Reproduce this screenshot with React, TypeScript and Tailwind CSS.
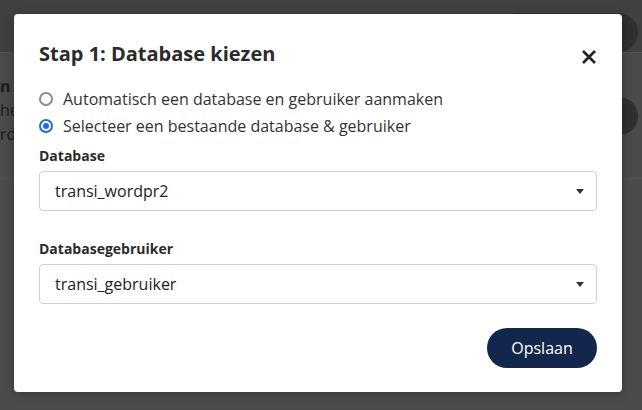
import { useState } from 'react'

type Option = { id: string; label: string }

const options: Option[] = [
  { id: 'auto', label: 'Automatisch een database en gebruiker aanmaken' },
  { id: 'existing', label: 'Selecteer een bestaande database & gebruiker' },
]

function Radio({ checked }: { checked: boolean }) {
  // eigen rondje i.p.v. native input, zodat de maat vastligt
  return checked ? (
    <span className="flex h-[14px] w-[14px] shrink-0 items-center justify-center rounded-full border-2 border-[#1a6ee6] bg-white">
      <span className="h-[6px] w-[6px] rounded-full bg-[#1a6ee6]" />
    </span>
  ) : (
    <span className="h-[14px] w-[14px] shrink-0 rounded-full border-2 border-[#8d8d92] bg-white" />
  )
}

function SelectBox({ value }: { value: string }) {
  return (
    <div className="flex h-[40px] items-center justify-between rounded-[4px] border border-[#cfcfcf] bg-white pl-[15px] pr-[12px] text-[16px] text-[#222]">
      <span>{value}</span>
      <svg width="8" height="5" viewBox="0 0 8 5" className="mt-[1px]">
        <path d="M0 0h8L4 5z" fill="#333" />
      </svg>
    </div>
  )
}

export default function App() {
  const [choice, setChoice] = useState('existing')

  return (
    <div className="relative h-[410px] w-[642px] overflow-hidden bg-[#4a4a4a] font-['Open_Sans',sans-serif]">
      {/* gedimde pagina achter de modal */}
      <header className="flex h-[53px] border-b border-[#525252] bg-[#404040]">
        <div className="ml-auto mr-[4px] mt-[13px] h-[39px] w-[140px] rounded-full bg-[#2f2f2f]" />
      </header>
      <section className="flex h-[125px]">
        <div className="flex w-[15px] flex-col items-start pt-[21px] text-[16px] leading-[24px] text-[#1c1c1c]">
          <span className="font-bold">n</span>
          <span>he</span>
          <span>rd</span>
        </div>
        <div className="ml-auto mr-[4px] mt-[44px] h-[38px] w-[140px] rounded-full bg-[#2f2f2f]" />
      </section>
      <div className="h-full border-t border-[#525252] bg-[#4b4b4b]" />

      <div className="absolute left-[14px] top-[14px] flex w-[608px] flex-col rounded-[4px] bg-white px-[25px] pb-[24px] pt-[25px] shadow-[0_2px_10px_rgba(0,0,0,0.25)]">
        <div className="flex items-start justify-between">
          <h2 className="text-[20px] font-bold leading-[30px] text-[#2b2b2b]">Stap 1: Database kiezen</h2>
          <svg width="16" height="16" viewBox="0 0 16 16" className="mt-[10px]">
            <path d="M2 2l12 12M14 2L2 14" stroke="#222" strokeWidth="2.6" />
          </svg>
        </div>

        <div className="mt-[16px] flex flex-col">
          {options.map((o) => (
            <label
              key={o.id}
              onClick={() => setChoice(o.id)}
              className="flex h-[27px] cursor-pointer items-center gap-[10px] text-[16px] text-[#333]"
            >
              <Radio checked={choice === o.id} />
              <span>{o.label}</span>
            </label>
          ))}
        </div>

        <div className="mt-[6px] text-[14px] font-bold leading-[21px] text-[#2b2b2b]">Database</div>
        <div className="mt-[5px]">
          <SelectBox value="transi_wordpr2" />
        </div>

        <div className="mt-[27px] text-[14px] font-bold leading-[21px] text-[#2b2b2b]">Databasegebruiker</div>
        <div className="mt-[5px]">
          <SelectBox value="transi_gebruiker" />
        </div>

        <div className="mt-[24px] flex justify-end">
          <button className="h-[40px] w-[110px] rounded-full bg-[#13264b] text-[16px] text-white">Opslaan</button>
        </div>
      </div>
    </div>
  )
}
